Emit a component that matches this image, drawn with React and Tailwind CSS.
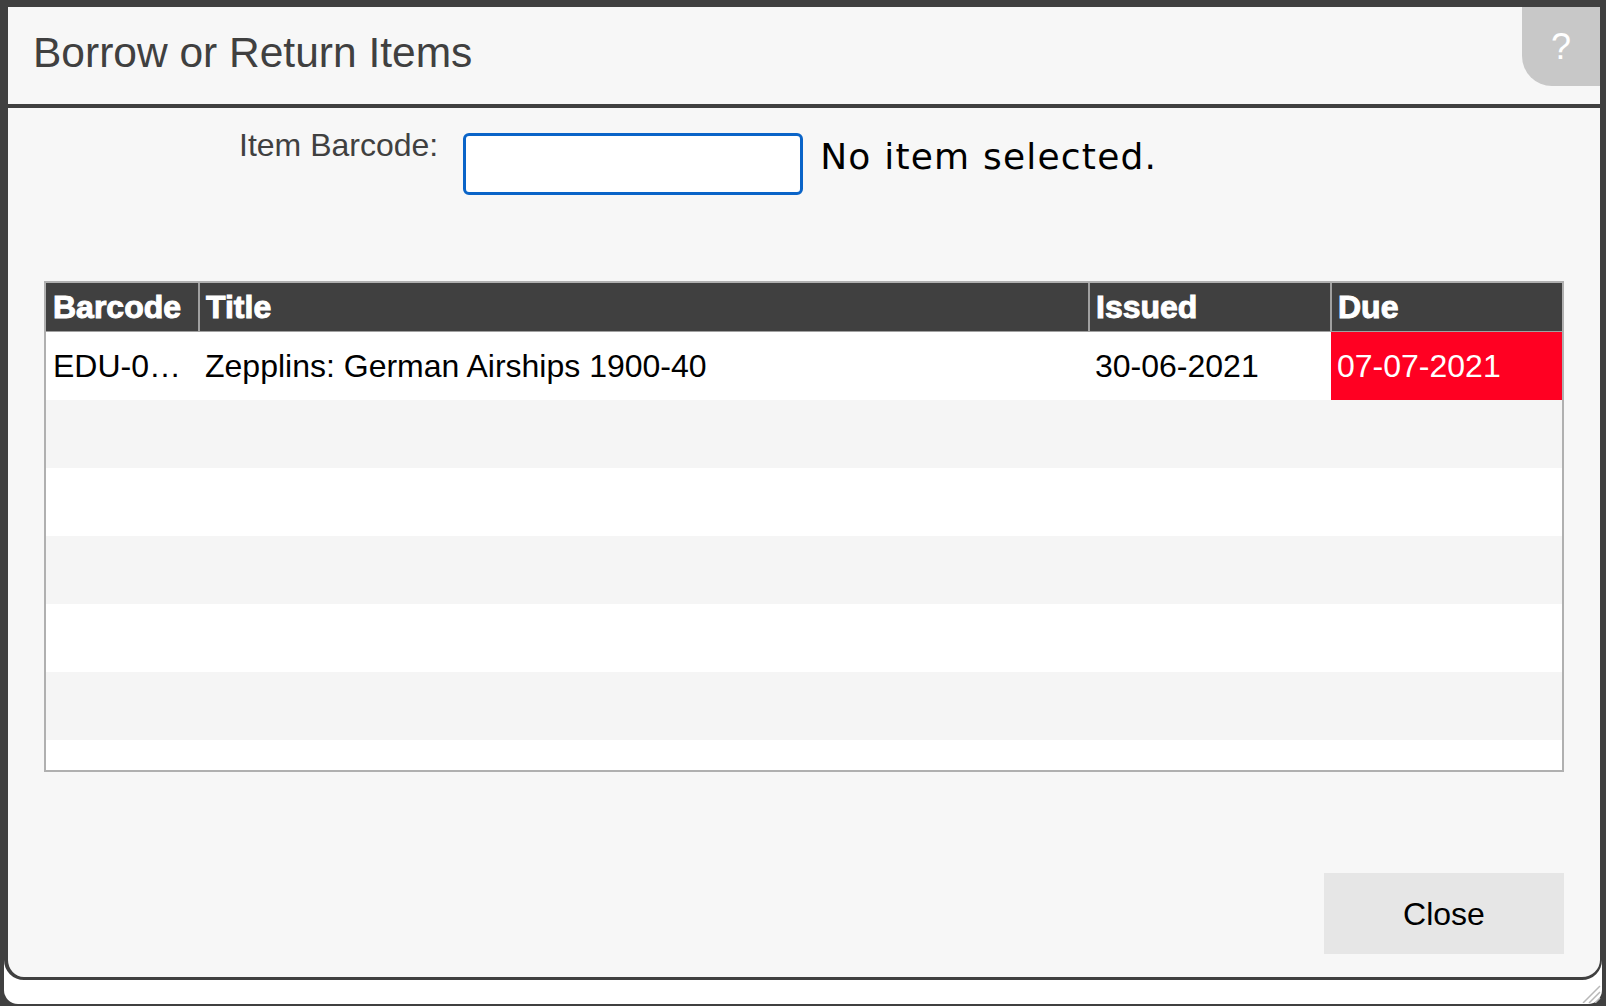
import React, { useState } from "react";

// Borrow / return dialog with a loans table

const loans = [
  { barcode: "EDU-0012345", title: "Zepplins: German Airships 1900-40", issued: "30-06-2021", due: "07-07-2021", overdue: true },
];

const App = () => {
  const [barcode, setBarcode] = useState("");

  // pad the table with blank rows so the striping fills the box
  const rows = [...loans];
  while (rows.length < 7) rows.push(null);

  return (
    <div className="h-[1006px] w-[1606px] bg-[#404040] overflow-hidden font-['Liberation_Sans',Arial,sans-serif]">
      <div className="mx-1 h-[1004px] bg-white rounded-b-[14px] flex flex-col">
        <div className="h-[980px] bg-[#f7f7f7] border-[#404040] border-t-[7px] border-l-4 border-r-2 border-b-[3px] rounded-b-[20px] flex flex-col">
          <div className="h-[101px] flex items-start justify-between border-b-4 border-[#404040]">
            <h1 className="pl-[25px] pt-[25px] text-[42.5px] leading-none text-[#404040] font-normal">Borrow or Return Items</h1>
            <button className="w-[78px] h-[79px] bg-[#c8c8c8] rounded-bl-[30px] text-white text-[36px] leading-none flex items-center justify-center">?</button>
          </div>

          <div className="flex flex-col flex-1 px-[36px]">
            <div className="flex items-start pt-[21px] pl-[195px]">
              <label className="text-[32px] leading-none text-[#404040]">Item Barcode:</label>
              <input
                value={barcode}
                onChange={(e) => setBarcode(e.target.value)}
                className="ml-[25px] mt-[4px] w-[340px] h-[62px] bg-white border-[3px] border-[#0a64c8] rounded-[6px] outline-none px-2 text-[28px]"
              />
              <span className="ml-[17px] mt-[10px] text-[36px] leading-none tracking-[1.2px] text-black font-['DejaVu_Sans',sans-serif]">No item selected.</span>
            </div>

            <div className="mt-[86px] h-[491px] border-2 border-[#b0b0b0] bg-white overflow-hidden">
              <table className="w-full table-fixed border-collapse text-[32px] text-black">
                <colgroup>
                  <col className="w-[153px]" />
                  <col className="w-[890px]" />
                  <col className="w-[242px]" />
                  <col className="w-[231px]" />
                </colgroup>
                <thead>
                  <tr className="bg-[#404040] text-white h-[48px]">
                    <th className="pl-[7px] pr-[4px] text-left font-bold [-webkit-text-stroke:1px_white] border-b border-[#a0a0a0]">Barcode</th>
                    <th className="pl-[6px] pr-[4px] text-left font-bold [-webkit-text-stroke:1px_white] border-b border-l-2 border-[#a0a0a0]">Title</th>
                    <th className="pl-[6px] pr-[4px] text-left font-bold [-webkit-text-stroke:1px_white] border-b border-l-2 border-[#a0a0a0]">Issued</th>
                    <th className="pl-[6px] pr-[4px] text-left font-bold [-webkit-text-stroke:1px_white] border-b border-l-2 border-[#a0a0a0]">Due</th>
                  </tr>
                </thead>
                <tbody>
                  {rows.map((r, idx) => (
                    <tr key={idx} className={idx % 2 === 1 ? "h-[68px] bg-[#f5f5f5]" : "h-[68px] bg-white"}>
                      <td className="pl-[7px] pr-[4px] whitespace-nowrap overflow-hidden text-ellipsis">{r ? r.barcode : ""}</td>
                      <td className="pl-[6px] pr-[4px] whitespace-nowrap overflow-hidden text-ellipsis">{r ? r.title : ""}</td>
                      <td className="pl-[6px] pr-[4px] whitespace-nowrap">{r ? r.issued : ""}</td>
                      <td className={r && r.overdue ? "pl-[6px] pr-[4px] whitespace-nowrap bg-[#ff0022] text-white" : "pl-[6px]"}>{r ? r.due : ""}</td>
                    </tr>
                  ))}
                </tbody>
              </table>
            </div>

            <div className="mt-auto mb-[23px] flex justify-end">
              <button className="w-[240px] h-[81px] bg-[#e6e6e6] text-[32px] text-black">Close</button>
            </div>
          </div>
        </div>

        <div className="flex-1 flex justify-end items-end pr-[1px] pb-[1px]">
          <svg width="22" height="20" viewBox="0 0 22 20" className="text-[#b8b8b8]">
            <path d="M21 3 L4 20 M21 9 L10 20 M21 15 L16 20" stroke="currentColor" strokeWidth="1.5" />
          </svg>
        </div>
      </div>
    </div>
  );
};

export default App;
